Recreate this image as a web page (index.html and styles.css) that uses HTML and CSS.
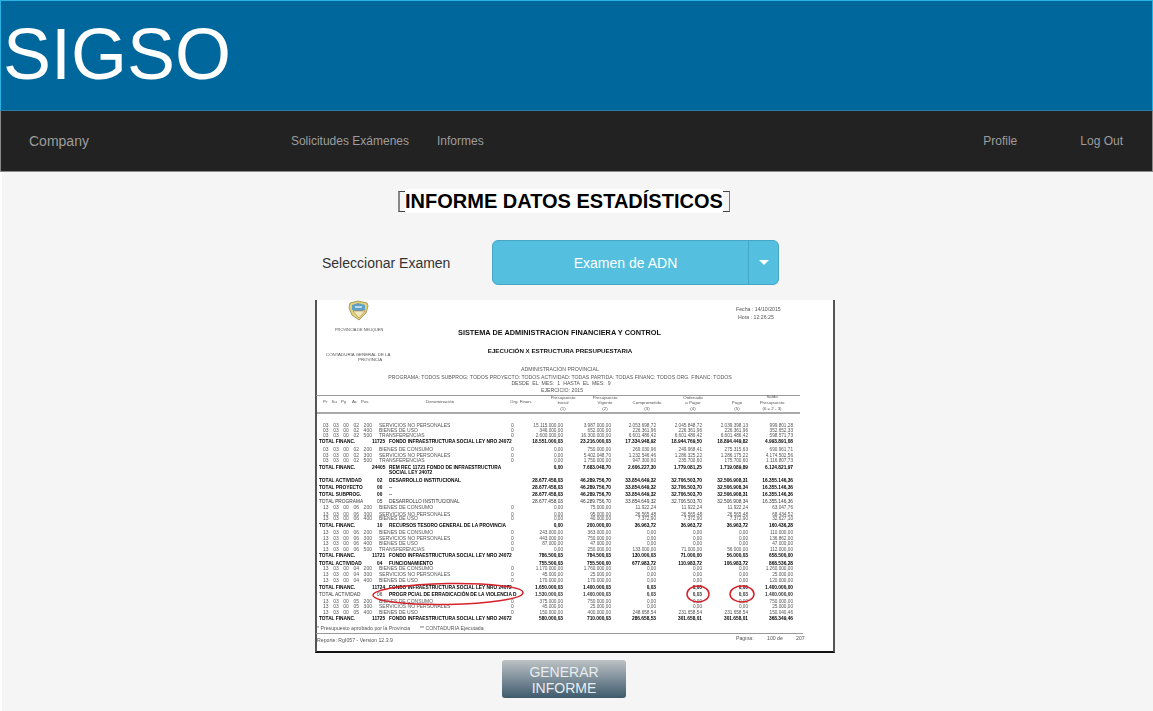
FILE: index.html
```html
<!DOCTYPE html>
<html lang="es">
<head>
<meta charset="utf-8">
<title>SIGSO</title>
<link rel="stylesheet" href="styles.css">
</head>
<body>
<header class="banner"><h1 class="banner-title">SIGSO</h1></header>
<nav class="navbar">
  <a class="brand">Company</a>
  <div class="nav-left"><a>Solicitudes Exámenes</a><a>Informes</a></div>
  <div class="nav-right"><a>Profile</a><a>Log Out</a></div>
</nav>
<main class="content">
  <h2 class="page-title"><span class="bracket bracket-l"></span><span class="page-title-text">INFORME DATOS ESTADÍSTICOS</span><span class="bracket bracket-r"></span></h2>
  <div class="select-row">
    <label class="select-label">Seleccionar Examen</label>
    <div class="select-btn">
      <span class="select-value">Examen de ADN</span>
      <span class="select-caret"><i class="caret"></i></span>
    </div>
  </div>
  <figure class="report">
    <svg class="report-svg" width="520" height="353" viewBox="0 0 520 353" xmlns="http://www.w3.org/2000/svg">
      <g class="crest">
        <path d="M35 3 L43 1 L52 3 L53 6 L51 13 L44 20 L37 15 L34 8 Z" fill="#e3d27a" stroke="#8d8a4e" stroke-width=".8"/>
        <path d="M37 5 L43 3 L50 5 L50 10 L43 12 L37 10 Z" fill="#5f9fc4"/>
        <path d="M38 11 L50 11 L44 18 Z" fill="#f0e9c0" stroke="#b2703c" stroke-width=".5"/>
        <path d="M40 7 H47" stroke="#fff" stroke-width="1.2"/>
      </g>
      <text class="t s" x="20" y="31">PROVINCIA DE NEUQUEN</text>
      <text class="t" x="11" y="56">CONTADURIA GENERAL DE LA</text>
      <text class="t" x="43" y="61">PROVINCIA</text>
      <text class="t w" x="421" y="11">Fecha : 14/10/2015</text>
      <text class="t w" x="423" y="19">Hora : 12:26:25</text>
      <text class="h1" x="244.5" y="35">SISTEMA DE ADMINISTRACION FINANCIERA Y CONTROL</text>
      <text class="h2" x="245" y="53">EJECUCIÓN X ESTRUCTURA PRESUPUESTARIA</text>
      <text class="t w c" x="245" y="71">ADMINISTRACION PROVINCIAL</text>
      <text class="t w c" x="245" y="79">PROGRAMA: TODOS   SUBPROG: TODOS   PROYECTO: TODOS   ACTIVIDAD: TODAS   PARTIDA: TODAS   FINANC: TODOS   ORG. FINANC: TODOS</text>
      <text class="t w c wide" x="246" y="85">DESDE EL MES: 1      HASTA EL MES: 9</text>
      <text class="t w c" x="247" y="92">EJERCICIO: 2015</text>
      <path class="rule" d="M1 95.5 H485"/>
      <path class="rule-thick" d="M1 113 H485"/>
      <text class="t" y="103"><tspan x="8">Pr</tspan><tspan x="16.5">Su</tspan><tspan x="26">Py</tspan><tspan x="37">Ac</tspan><tspan x="46">Pos</tspan><tspan x="111">Denominación</tspan><tspan x="195">Org. Finan.</tspan></text>
      <g class="t c">
        <text x="248" y="99">Presupuesto</text><text x="248" y="104">Inicial</text><text x="248" y="110">(1)</text>
        <text x="290" y="99">Presupuesto</text><text x="290" y="104">Vigente</text><text x="290" y="110">(2)</text>
        <text x="332" y="104">Comprometido</text><text x="332" y="110">(3)</text>
        <text x="378" y="99">Ordenado</text><text x="378" y="104">a Pagar</text><text x="378" y="110">(4)</text>
        <text x="422" y="104">Pago</text><text x="422" y="110">(5)</text>
        <text x="457" y="98">Saldo</text><text x="457" y="104">Presupuesto</text><text x="457" y="110">(6 = 2 - 3)</text>
      </g>

      <g class="r"><text y="127"><tspan class="code" x="8">03 03 00 02 200</tspan><tspan x="64">SERVICIOS NO PERSONALES</tspan><tspan x="196">0</tspan></text><text class="n" y="127"><tspan x="248">15.115.000,00</tspan><tspan x="296">3.987.000,00</tspan><tspan x="341">2.053.698,72</tspan><tspan x="387">2.045.848,72</tspan><tspan x="433">2.039.398,13</tspan><tspan x="478">999.801,28</tspan></text></g>
      <g class="r"><text y="132"><tspan class="code" x="8">03 03 00 02 400</tspan><tspan x="64">BIENES DE USO</tspan><tspan x="196">0</tspan></text><text class="n" y="132"><tspan x="248">346.000,00</tspan><tspan x="296">652.000,00</tspan><tspan x="341">226.361,96</tspan><tspan x="387">226.361,96</tspan><tspan x="433">226.361,96</tspan><tspan x="478">352.652,33</tspan></text></g>
      <g class="r"><text y="137"><tspan class="code" x="8">03 03 00 02 500</tspan><tspan x="64">TRANSFERENCIAS</tspan><tspan x="196">0</tspan></text><text class="n" y="137"><tspan x="248">2.600.000,00</tspan><tspan x="296">16.300.000,00</tspan><tspan x="341">6.601.486,42</tspan><tspan x="387">6.601.486,42</tspan><tspan x="433">6.601.486,42</tspan><tspan x="478">598.571,73</tspan></text></g>
      <g class="b"><text y="143"><tspan x="4">TOTAL FINANC.</tspan><tspan x="57">11725</tspan><tspan x="74">FONDO INFRAESTRUCTURA SOCIAL LEY NRO 24072</tspan></text><text class="n" y="143"><tspan x="248">18.551.000,03</tspan><tspan x="296">23.216.000,03</tspan><tspan x="341">17.334.948,92</tspan><tspan x="387">18.944.769,50</tspan><tspan x="433">18.894.449,82</tspan><tspan x="478">4.993.891,08</tspan></text></g>
      <g class="r"><text y="151"><tspan class="code" x="8">03 03 00 02 200</tspan><tspan x="64">BIENES DE CONSUMO</tspan><tspan x="196">0</tspan></text><text class="n" y="151"><tspan x="248">0,00</tspan><tspan x="296">750.000,00</tspan><tspan x="341">269.030,96</tspan><tspan x="387">249.968,41</tspan><tspan x="433">275.315,63</tspan><tspan x="478">690.961,71</tspan></text></g>
      <g class="r"><text y="157"><tspan class="code" x="8">03 03 00 02 300</tspan><tspan x="64">SERVICIOS NO PERSONALES</tspan><tspan x="196">0</tspan></text><text class="n" y="157"><tspan x="248">0,00</tspan><tspan x="296">5.402.048,70</tspan><tspan x="341">1.232.546,46</tspan><tspan x="387">1.286.325,22</tspan><tspan x="433">1.286.175,22</tspan><tspan x="478">4.174.502,56</tspan></text></g>
      <g class="r"><text y="162"><tspan class="code" x="8">03 03 00 02 500</tspan><tspan x="64">TRANSFERENCIAS</tspan><tspan x="196">0</tspan></text><text class="n" y="162"><tspan x="248">0,00</tspan><tspan x="296">1.750.000,00</tspan><tspan x="341">947.300,60</tspan><tspan x="387">235.700,60</tspan><tspan x="433">175.700,60</tspan><tspan x="478">1.116.807,73</tspan></text></g>
      <g class="b"><text y="169"><tspan x="4">TOTAL FINANC.</tspan><tspan x="57">24405</tspan><tspan x="74">REM REC 11721 FONDO DE INFRAESTRUCTURA</tspan></text><text class="n" y="169"><tspan x="248">0,00</tspan><tspan x="296">7.683.048,70</tspan><tspan x="341">2.606.227,30</tspan><tspan x="387">1.779.081,25</tspan><tspan x="433">1.719.089,89</tspan><tspan x="478">6.124.821,97</tspan></text></g>
      <text class="b" x="74" y="174">SOCIAL LEY 24072</text>
      <g class="b"><text y="182"><tspan x="4">TOTAL ACTIVIDAD</tspan><tspan x="62">02</tspan><tspan x="74">DESARROLLO INSTITUCIONAL</tspan></text><text class="n" y="182"><tspan x="248">28.677.458,03</tspan><tspan x="296">46.289.756,70</tspan><tspan x="341">33.854.649,32</tspan><tspan x="387">32.706.503,70</tspan><tspan x="433">32.506.908,31</tspan><tspan x="478">16.355.146,36</tspan></text></g>
      <g class="b"><text y="189"><tspan x="4">TOTAL PROYECTO</tspan><tspan x="62">00</tspan><tspan x="74">--</tspan></text><text class="n" y="189"><tspan x="248">28.677.458,03</tspan><tspan x="296">46.289.756,70</tspan><tspan x="341">33.854.649,32</tspan><tspan x="387">32.706.503,70</tspan><tspan x="433">32.506.908,34</tspan><tspan x="478">16.355.146,36</tspan></text></g>
      <g class="b"><text y="196"><tspan x="4">TOTAL SUBPROG.</tspan><tspan x="62">00</tspan><tspan x="74">--</tspan></text><text class="n" y="196"><tspan x="248">28.677.458,03</tspan><tspan x="296">46.289.756,70</tspan><tspan x="341">33.854.649,32</tspan><tspan x="387">32.706.503,70</tspan><tspan x="433">32.506.908,31</tspan><tspan x="478">16.355.146,36</tspan></text></g>
      <g class="m"><text y="203"><tspan x="4">TOTAL PROGRAMA</tspan><tspan x="62">05</tspan><tspan x="74">DESARROLLO INSTITUCIONAL</tspan></text><text class="n" y="203"><tspan x="248">28.677.458,03</tspan><tspan x="296">46.289.756,70</tspan><tspan x="341">33.854.649,32</tspan><tspan x="387">32.706.503,70</tspan><tspan x="433">32.506.908,34</tspan><tspan x="478">16.355.146,36</tspan></text></g>
      <g class="r"><text y="209"><tspan class="code" x="8">13 03 00 06 200</tspan><tspan x="64">BIENES DE CONSUMO</tspan><tspan x="196">0</tspan></text><text class="n" y="209"><tspan x="248">0,00</tspan><tspan x="296">75.000,00</tspan><tspan x="341">11.922,24</tspan><tspan x="387">11.922,24</tspan><tspan x="433">11.922,24</tspan><tspan x="478">63.047,76</tspan></text></g>
      <g class="r"><text y="216"><tspan class="code" x="8">13 03 00 06 300</tspan><tspan x="64">SERVICIOS NO PERSONALES</tspan><tspan x="196">0</tspan></text><text class="n" y="216"><tspan x="248">0,00</tspan><tspan x="296">95.000,00</tspan><tspan x="341">26.565,48</tspan><tspan x="387">26.565,48</tspan><tspan x="433">26.565,48</tspan><tspan x="478">68.434,52</tspan></text></g>
      <g class="r"><text y="220"><tspan class="code" x="8">13 03 00 06 400</tspan><tspan x="64">BIENES DE USO</tspan><tspan x="196">0</tspan></text><text class="n" y="220"><tspan x="248">0,00</tspan><tspan x="296">40.000,00</tspan><tspan x="341">7.372,90</tspan><tspan x="387">7.372,90</tspan><tspan x="433">7.372,90</tspan><tspan x="478">32.627,10</tspan></text></g>
      <g class="b"><text y="227"><tspan x="4">TOTAL FINANC.</tspan><tspan x="62">10</tspan><tspan x="74">RECURSOS TESORO GENERAL DE LA PROVINCIA</tspan></text><text class="n" y="227"><tspan x="248">0,00</tspan><tspan x="296">200.000,00</tspan><tspan x="341">36.963,72</tspan><tspan x="387">36.963,72</tspan><tspan x="433">36.963,72</tspan><tspan x="478">160.436,28</tspan></text></g>
      <g class="r"><text y="234"><tspan class="code" x="8">13 03 00 06 200</tspan><tspan x="64">BIENES DE CONSUMO</tspan><tspan x="196">0</tspan></text><text class="n" y="234"><tspan x="248">243.000,00</tspan><tspan x="296">363.000,00</tspan><tspan x="341">0,00</tspan><tspan x="387">0,00</tspan><tspan x="433">0,00</tspan><tspan x="478">110.000,00</tspan></text></g>
      <g class="r"><text y="240"><tspan class="code" x="8">13 03 00 06 300</tspan><tspan x="64">SERVICIOS NO PERSONALES</tspan><tspan x="196">0</tspan></text><text class="n" y="240"><tspan x="248">443.000,00</tspan><tspan x="296">750.000,00</tspan><tspan x="341">0,00</tspan><tspan x="387">0,00</tspan><tspan x="433">0,00</tspan><tspan x="478">136.862,00</tspan></text></g>
      <g class="r"><text y="245"><tspan class="code" x="8">13 03 00 06 400</tspan><tspan x="64">BIENES DE USO</tspan><tspan x="196">0</tspan></text><text class="n" y="245"><tspan x="248">87.000,00</tspan><tspan x="296">47.000,00</tspan><tspan x="341">0,00</tspan><tspan x="387">0,00</tspan><tspan x="433">0,00</tspan><tspan x="478">47.000,00</tspan></text></g>
      <g class="r"><text y="251"><tspan class="code" x="8">13 03 00 06 500</tspan><tspan x="64">TRANSFERENCIAS</tspan><tspan x="196">0</tspan></text><text class="n" y="251"><tspan x="248">0,00</tspan><tspan x="296">250.000,00</tspan><tspan x="341">133.000,00</tspan><tspan x="387">71.000,00</tspan><tspan x="433">56.000,00</tspan><tspan x="478">112.000,00</tspan></text></g>
      <g class="b"><text y="257"><tspan x="4">TOTAL FINANC.</tspan><tspan x="57">11721</tspan><tspan x="74">FONDO INFRAESTRUCTURA SOCIAL LEY NRO 24072</tspan></text><text class="n" y="257"><tspan x="248">786.500,03</tspan><tspan x="296">784.500,03</tspan><tspan x="341">130.000,03</tspan><tspan x="387">71.000,00</tspan><tspan x="433">56.000,03</tspan><tspan x="478">658.500,00</tspan></text></g>
      <g class="b"><text y="265"><tspan x="4">TOTAL ACTIVIDAD</tspan><tspan x="62">04</tspan><tspan x="74">FUNCIONAMIENTO</tspan></text><text class="n" y="265"><tspan x="248">755.500,03</tspan><tspan x="296">755.500,00</tspan><tspan x="341">677.983,72</tspan><tspan x="387">110.983,72</tspan><tspan x="433">106.983,72</tspan><tspan x="478">868.536,28</tspan></text></g>
      <g class="r"><text y="270"><tspan class="code" x="8">13 03 00 04 200</tspan><tspan x="64">BIENES DE CONSUMO</tspan><tspan x="196">0</tspan></text><text class="n" y="270"><tspan x="248">1.170.000,00</tspan><tspan x="296">1.760.000,00</tspan><tspan x="341">0,00</tspan><tspan x="387">0,00</tspan><tspan x="433">0,00</tspan><tspan x="478">1.260.000,00</tspan></text></g>
      <g class="r"><text y="276"><tspan class="code" x="8">13 03 00 04 300</tspan><tspan x="64">SERVICIOS NO PERSONALES</tspan><tspan x="196">0</tspan></text><text class="n" y="276"><tspan x="248">45.000,00</tspan><tspan x="296">25.000,00</tspan><tspan x="341">0,00</tspan><tspan x="387">0,00</tspan><tspan x="433">0,00</tspan><tspan x="478">25.000,00</tspan></text></g>
      <g class="r"><text y="282"><tspan class="code" x="8">13 03 00 04 400</tspan><tspan x="64">BIENES DE USO</tspan><tspan x="196">0</tspan></text><text class="n" y="282"><tspan x="248">170.000,00</tspan><tspan x="296">170.000,00</tspan><tspan x="341">0,00</tspan><tspan x="387">0,00</tspan><tspan x="433">0,00</tspan><tspan x="478">120.000,00</tspan></text></g>
      <g class="b"><text y="289"><tspan x="4">TOTAL FINANC.</tspan><tspan x="57">11724</tspan><tspan x="74">FONDO INFRAESTRUCTURA SOCIAL LEY NRO 24072</tspan></text><text class="n" y="289"><tspan x="248">1.650.000,03</tspan><tspan x="296">1.400.000,03</tspan><tspan x="341">0,03</tspan><tspan x="387">0,00</tspan><tspan x="433">0,00</tspan><tspan x="478">1.400.000,00</tspan></text></g>
      <g class="m"><text y="296"><tspan x="4">TOTAL ACTIVIDAD</tspan><tspan x="62">06</tspan><tspan class="bd" x="74">PROGR PCIAL DE ERRADICACIÓN DE LA VIOLENCIA D</tspan></text><text class="n bd" y="296"><tspan x="248">1.530.000,03</tspan><tspan x="296">1.400.000,03</tspan><tspan x="341">0,03</tspan><tspan x="387">0,03</tspan><tspan x="433">0,03</tspan><tspan x="478">1.400.000,00</tspan></text></g>
      <g class="r"><text y="303"><tspan class="code" x="8">13 03 00 05 200</tspan><tspan x="64">BIENES DE CONSUMO</tspan><tspan x="196">0</tspan></text><text class="n" y="303"><tspan x="248">375.000,00</tspan><tspan x="296">750.000,00</tspan><tspan x="341">0,00</tspan><tspan x="387">0,00</tspan><tspan x="433">0,00</tspan><tspan x="478">750.000,00</tspan></text></g>
      <g class="r"><text y="308"><tspan class="code" x="8">13 03 00 05 300</tspan><tspan x="64">SERVICIOS NO PERSONALES</tspan><tspan x="196">0</tspan></text><text class="n" y="308"><tspan x="248">45.000,00</tspan><tspan x="296">25.000,00</tspan><tspan x="341">0,00</tspan><tspan x="387">0,00</tspan><tspan x="433">0,00</tspan><tspan x="478">25.000,00</tspan></text></g>
      <g class="r"><text y="314"><tspan class="code" x="8">13 03 00 05 400</tspan><tspan x="64">BIENES DE USO</tspan><tspan x="196">0</tspan></text><text class="n" y="314"><tspan x="248">150.000,00</tspan><tspan x="296">400.000,00</tspan><tspan x="341">248.658,54</tspan><tspan x="387">231.658,54</tspan><tspan x="433">231.658,54</tspan><tspan x="478">150.040,46</tspan></text></g>
      <g class="b"><text y="320"><tspan x="4">TOTAL FINANC.</tspan><tspan x="57">11725</tspan><tspan x="74">FONDO INFRAESTRUCTURA SOCIAL LEY NRO 24072</tspan></text><text class="n" y="320"><tspan x="248">580.000,03</tspan><tspan x="296">710.000,03</tspan><tspan x="341">286.658,53</tspan><tspan x="387">301.658,01</tspan><tspan x="433">301.658,01</tspan><tspan x="478">368.349,46</tspan></text></g>

      <ellipse class="mark" cx="133" cy="294" rx="75" ry="10.5" transform="rotate(-1 133 294)"/>
      <ellipse class="mark" cx="383" cy="294" rx="11" ry="8"/>
      <ellipse class="mark" cx="427" cy="294" rx="12" ry="8"/>

      <text class="t w" y="330"><tspan x="2">* Presupuesto aprobado por la Provincia</tspan><tspan x="105">** CONTADURIA Ejecutada</tspan></text>
      <path class="rule" d="M1 333.5 H488"/>
      <text class="t w" x="2" y="342">Reporte: RgI057 - Version 12.3.9</text>
      <text class="t w" y="340"><tspan x="421">Pagina:</tspan><tspan x="452">100 de</tspan><tspan x="481">207</tspan></text>
    </svg>
  </figure>
  <button class="generate">GENERAR INFORME</button>
</main>
</body>
</html>
```
FILE: styles.css
```css
* { box-sizing: border-box; }
html, body { height: 100%; }
body {
  margin: 0;
  background: #fff;
  font-family: "Liberation Sans", Arial, sans-serif;
  overflow: hidden;
  display: flex;
  flex-direction: column;
}
.banner {
  height: 111px;
  background: #00679d;
  border: 1px solid #29b3e3;
  border-bottom-color: #2a7a9e;
  flex: none;
}
.banner-title {
  margin: 0;
  padding: 13px 0 0 2px;
  font-size: 72px;
  line-height: 80px;
  font-weight: 400;
  color: #fff;
}
.navbar {
  height: 61px;
  flex: none;
  background: #222;
  border: 1px solid #8a8a8a;
  border-top: 0;
  color: #9d9d9d;
  display: flex;
  align-items: center;
  padding: 0 29px 0 28px;
  font-size: 12px;
}
.brand { font-size: 14px; }
.nav-left { display: flex; gap: 28px; margin-left: 202px; }
.nav-right { display: flex; gap: 63px; margin-left: auto; }
.content {
  flex: 1;
  margin-left: 2px;
  background: #f5f5f5;
  display: flex;
  flex-direction: column;
  align-items: flex-start;
  padding: 18px 0 0 313px;
}
.page-title {
  margin: 0 0 0 83px;
  display: flex;
  align-items: center;
  height: 22px;
  font-size: 20px;
  font-weight: 700;
  color: #000;
}
.page-title-text { background: #fff; line-height: 24px; padding: 0; }
.bracket { width: 7px; height: 21px; border: 1px solid #444; flex: none; }
.bracket-l { border-right: 0; border-left: 2px solid #888; }
.bracket-r { border-left: 0; border-right: 1px solid #777; }
.select-row {
  display: flex;
  align-items: center;
  margin: 28px 0 0 7px;
  height: 45px;
}
.select-label { width: 170px; font-size: 14px; color: #333; }
.select-btn {
  width: 287px;
  height: 45px;
  display: flex;
  background: #54bfdf;
  border: 1px solid #46a6c6;
  border-radius: 6px;
  color: #fff;
  font-size: 14px;
}
.select-value { flex: 1; display: flex; align-items: center; justify-content: center; padding-left: 10px; }
.select-caret {
  width: 30px;
  border-left: 1px solid #46a6c6;
  display: flex;
  align-items: center;
  justify-content: center;
}
.caret {
  width: 0; height: 0;
  border-left: 5px solid transparent;
  border-right: 5px solid transparent;
  border-top: 5px solid #fff;
}
.report {
  margin: 15px 0 0 0;
  width: 520px;
  height: 353px;
  background: #fff;
  border: solid #555;
  border-width: 0 2px 2px 2px;
  border-bottom-color: #111;
  flex: none;
}
.report-svg {
  display: block;
  margin: 0 0 0 -2px;
  filter: blur(.42px);
  font-family: "Liberation Sans", Arial, sans-serif;
}
.t { font-size: 4.4px; fill: #555; }
.t.s { font-size: 3.9px; }
.t.w { font-size: 5.2px; }
.wide { word-spacing: 1.6px; }
.c text, text.c { text-anchor: middle; }
.h1 { font-size: 7.35px; font-weight: 700; fill: #111; text-anchor: middle; }
.h2 { font-size: 6.2px; font-weight: 700; fill: #111; text-anchor: middle; }
.r text { font-size: 5px; fill: #555; }
.r text.n { font-size: 4.7px; }
.code { word-spacing: 3.2px; }
.b text, text.b { font-size: 4.8px; font-weight: 700; fill: #000; }
.m text { font-size: 4.8px; fill: #333; }
.bd { font-weight: 700; fill: #000; }
text.n { text-anchor: end; }
.rule { stroke: #999; stroke-width: 1; fill: none; }
.rule-thick { stroke: #555; stroke-width: 1; fill: none; }
.mark { fill: none; stroke: #d6222b; stroke-width: 1.5; }
.generate {
  margin: 7px 0 0 187px;
  width: 124px;
  height: 38px;
  padding: 2px 10px 0;
  flex: none;
  border: 0;
  border-radius: 3px;
  background: linear-gradient(#bcc2c5, #3e5a6c);
  color: #e9edef;
  font: 14px/16px "Liberation Sans", Arial, sans-serif;
}
```
